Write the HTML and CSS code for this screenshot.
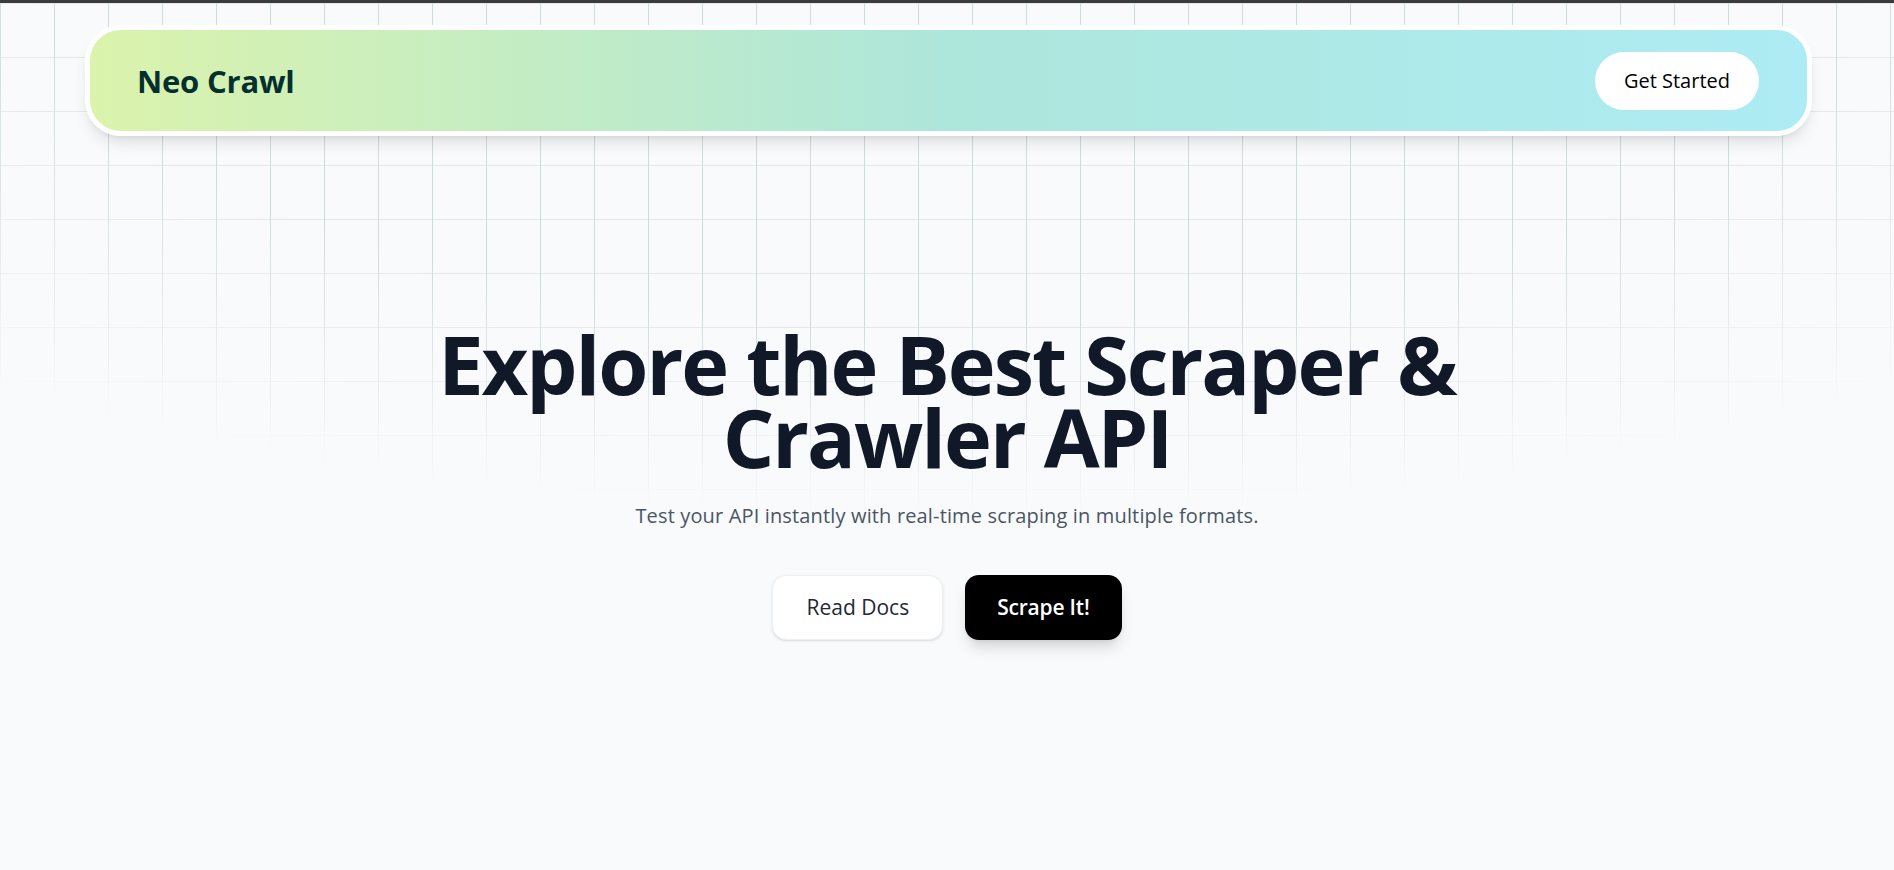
FILE: index.html
```html
<!DOCTYPE html>
<html lang="en">
<head>
<meta charset="utf-8">
<title>Neo Crawl</title>
<link rel="stylesheet" href="styles.css">
</head>
<body>
<div class="topbar"></div>
<div class="page">
  <header class="nav-wrap">
    <nav class="nav">
      <span class="brand">Neo Crawl</span>
      <a class="btn-started" href="#">Get Started</a>
    </nav>
  </header>
  <main class="hero">
    <h1 class="title"><span class="line">Explore the Best Scraper &amp;</span><span class="line">Crawler API</span></h1>
    <p class="subtitle">Test your API instantly with real-time scraping in multiple formats.</p>
    <div class="actions">
      <a class="btn btn-light" href="#">Read Docs</a>
      <a class="btn btn-dark" href="#">Scrape It!</a>
    </div>
  </main>
</div>
</body>
</html>
```
FILE: styles.css
```css
* { box-sizing: border-box; }
html, body { margin: 0; padding: 0; }
body {
  background: #f8fafc;
  font-family: "Open Sans", "Noto Sans", sans-serif;
  min-height: 870px;
  overflow: hidden;
}
a { text-decoration: none; }
.topbar {
  height: 3px;
  background: #3b3b3b;
}
.page {
  position: relative;
  min-height: 867px;
}
.page::before {
  content: "";
  position: absolute;
  inset: 0;
  background-image:
    linear-gradient(to right, #cddcde 1px, transparent 1px),
    linear-gradient(to bottom, #e2e7eb 1px, transparent 1px);
  background-size: 54px 54px;
  -webkit-mask-image: radial-gradient(ellipse 1420px 515px at 50% 0, #000 62%, transparent 100%);
  mask-image: radial-gradient(ellipse 1420px 515px at 50% 0, #000 62%, transparent 100%);
  z-index: 0;
  pointer-events: none;
}
.nav-wrap {
  position: relative;
  z-index: 1;
  padding: 22px 82px 0 85px;
}
.nav {
  height: 111px;
  border: 5px solid #fff;
  border-radius: 36px;
  background: linear-gradient(90deg, #dbf3ac 0%, #ade6db 50%, #adecf4 100%);
  box-shadow: 0 10px 15px -3px rgba(0,0,0,0.1), 0 4px 6px -4px rgba(0,0,0,0.1);
  display: flex;
  align-items: center;
  justify-content: space-between;
  padding: 0 48px 0 47px;
}
.brand {
  font-weight: 700;
  font-size: 31px;
  color: #042f2e;
  letter-spacing: -0.2px;
}
.btn-started {
  background: #fff;
  color: #000;
  font-size: 20px;
  line-height: 28px;
  padding: 15px 29px;
  border-radius: 999px;
}
.hero {
  position: relative;
  z-index: 1;
  display: flex;
  flex-direction: column;
  align-items: center;
  text-align: center;
  padding-top: 191px;
}
.title {
  margin: 0;
  font-size: 81px;
  line-height: 73px;
  font-weight: 700;
  color: #111827;
  letter-spacing: -2px;
  display: flex;
  flex-direction: column;
  align-items: center;
}
.line {
  display: block;
  height: 73px;
}
.subtitle {
  margin: 29px 0 0;
  font-size: 20px;
  line-height: 28px;
  color: #4b5563;
  letter-spacing: 0.15px;
}
.actions {
  margin-top: 45px;
  display: flex;
  gap: 22px;
}
.btn {
  font-size: 21px;
  line-height: 25px;
  padding: 20px 32px;
  border-radius: 14px;
}
.btn-light {
  background: #fff;
  color: #1f2937;
  font-weight: 500;
  border: 1px solid #eef0f3;
  padding: 19px 33px;
  box-shadow: 0 1px 3px rgba(0,0,0,0.1), 0 1px 2px -1px rgba(0,0,0,0.1);
}
.btn-dark {
  background: #000;
  color: #fff;
  font-weight: 600;
  letter-spacing: -0.2px;
  box-shadow: 0 10px 15px -3px rgba(0,0,0,0.15), 0 4px 6px -4px rgba(0,0,0,0.1);
}
```
